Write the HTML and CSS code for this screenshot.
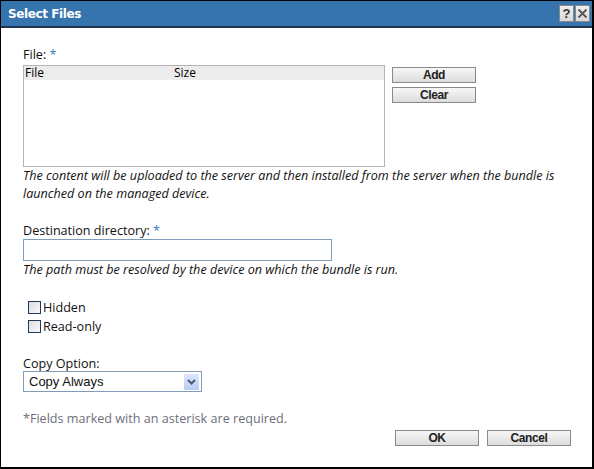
FILE: index.html
```html
<!DOCTYPE html>
<html>
<head>
<meta charset="utf-8">
<link rel="stylesheet" href="styles.css">
</head>
<body>
<div class="dialog">
  <div class="titlebar">
    <span class="title">Select Files</span>
    <div class="tools">
      <span class="tool">?</span>
      <span class="tool close">
        <svg width="11" height="11" viewBox="0 0 11 11"><path d="M1.5 1.5 L9.5 9.5 M9.5 1.5 L1.5 9.5" stroke="#555" stroke-width="1.8" fill="none"/></svg>
      </span>
    </div>
  </div>
  <div class="body">
    <div class="label">File: <span class="req">*</span></div>
    <div class="filerow">
      <div class="listbox">
        <div class="listhead"><span class="col-file">File</span><span class="col-size">Size</span></div>
      </div>
      <div class="sidebtns">
        <button class="btn">Add</button>
        <button class="btn">Clear</button>
      </div>
    </div>
    <p class="hint">The content will be uploaded to the server and then installed from the server when the bundle is launched on the managed device.</p>

    <div class="label dest">Destination directory: <span class="req">*</span></div>
    <div class="textinput"></div>
    <p class="hint single">The path must be resolved by the device on which the bundle is run.</p>

    <div class="checks">
      <label class="check"><span class="box"></span>Hidden</label>
      <label class="check"><span class="box"></span>Read-only</label>
    </div>

    <div class="label copy">Copy Option:</div>
    <div class="select">
      <span class="selval">Copy Always</span>
      <span class="arrow"><svg width="9" height="6" viewBox="0 0 9 6"><path d="M1 1 L4.5 4.5 L8 1" stroke="#4a5a78" stroke-width="2" fill="none"/></svg></span>
    </div>

    <div class="note">*Fields marked with an asterisk are required.</div>
    <div class="footer">
      <button class="btn wide">OK</button>
      <button class="btn wide">Cancel</button>
    </div>
  </div>
</div>
</body>
</html>
```

FILE: styles.css
```css
html, body {
  margin: 0;
  padding: 0;
  background: #fff;
}
.dialog {
  width: 594px;
  height: 469px;
  box-sizing: border-box;
  border: 1px solid #000;
  border-right-width: 2px;
  border-bottom-width: 2px;
  font-family: "Open Sans", "Noto Sans", sans-serif;
  font-size: 12.6px;
  color: #111;
  background: #fff;
}
.titlebar {
  height: 25px;
  background: #3674ad;
  border-bottom: 2px solid #1d3550;
  display: flex;
  align-items: center;
  justify-content: space-between;
  padding: 0 2px 0 7px;
}
.title {
  color: #fff;
  font-family: "DejaVu Sans", sans-serif;
  font-weight: bold;
  font-size: 12px;
  letter-spacing: -0.4px;
}
.tools {
  display: flex;
  gap: 1px;
}
.tool {
  width: 15px;
  height: 17px;
  background: linear-gradient(#f0f0f0, #d8d8d8);
  border: 1px solid #888;
  box-sizing: border-box;
  display: flex;
  align-items: center;
  justify-content: center;
  font-family: "Liberation Sans", Arial, sans-serif;
  font-weight: bold;
  font-size: 13px;
  color: #333;
}
.body {
  padding: 19px 0 0 22px;
}
.label {
  line-height: 16px;
  height: 16px;
}
.req {
  color: #3a7cc0;
}
.filerow {
  display: flex;
  margin-top: 2px;
}
.listbox {
  width: 360px;
  height: 100px;
  border: 1px solid #b4b4b4;
  background: #fff;
}
.listhead {
  height: 14px;
  background: #ececec;
  display: flex;
  line-height: 14px;
  font-size: 12px;
  color: #000;
}
.col-file {
  width: 149px;
  padding-left: 1px;
}
.sidebtns {
  display: flex;
  flex-direction: column;
  gap: 4px;
  margin-left: 7px;
  padding-top: 2px;
}
.btn {
  width: 84px;
  height: 16px;
  padding: 0;
  border: 1px solid #8a8a8a;
  background: linear-gradient(#f7f7f7, #dcdcdc);
  font-family: "Liberation Sans", Arial, sans-serif;
  font-weight: bold;
  font-size: 12px;
  letter-spacing: -0.4px;
  color: #222;
  line-height: 14px;
}
.hint {
  margin: 0;
  font-style: italic;
  line-height: 18px;
  width: 548px;
}
.dest {
  margin-top: 20px;
}
.textinput {
  width: 307px;
  height: 20px;
  border: 1px solid #7f9db9;
}
.checks {
  margin-top: 21px;
  display: flex;
  flex-direction: column;
  gap: 4px;
  padding-left: 5px;
}
.check {
  display: flex;
  align-items: center;
  height: 15px;
}
.box {
  width: 11px;
  height: 11px;
  border: 1px solid #1e395b;
  background: linear-gradient(135deg, #dcdcdc, #fafafa);
  margin-right: 2px;
}
.copy {
  margin-top: 22px;
  height: 15px;
}
.select {
  border: 1px solid #7f9db9;
  display: flex;
  align-items: center;
  justify-content: space-between;
  padding: 0 2px 0 5px;
  box-sizing: border-box;
  width: 179px;
  height: 21px;
}
.selval {
  font-family: "Liberation Sans", Arial, sans-serif;
  font-size: 13px;
}
.arrow {
  width: 15px;
  height: 16px;
  background: linear-gradient(#dce6fb, #b8cdf5);
  display: flex;
  align-items: center;
  justify-content: center;
  border-radius: 1px;
}
.note {
  margin-top: 19px;
  color: #6e6e7a;
  line-height: 16px;
}
.footer {
  display: flex;
  justify-content: flex-end;
  gap: 8px;
  padding-right: 21px;
  margin-top: 3px;
}
```
